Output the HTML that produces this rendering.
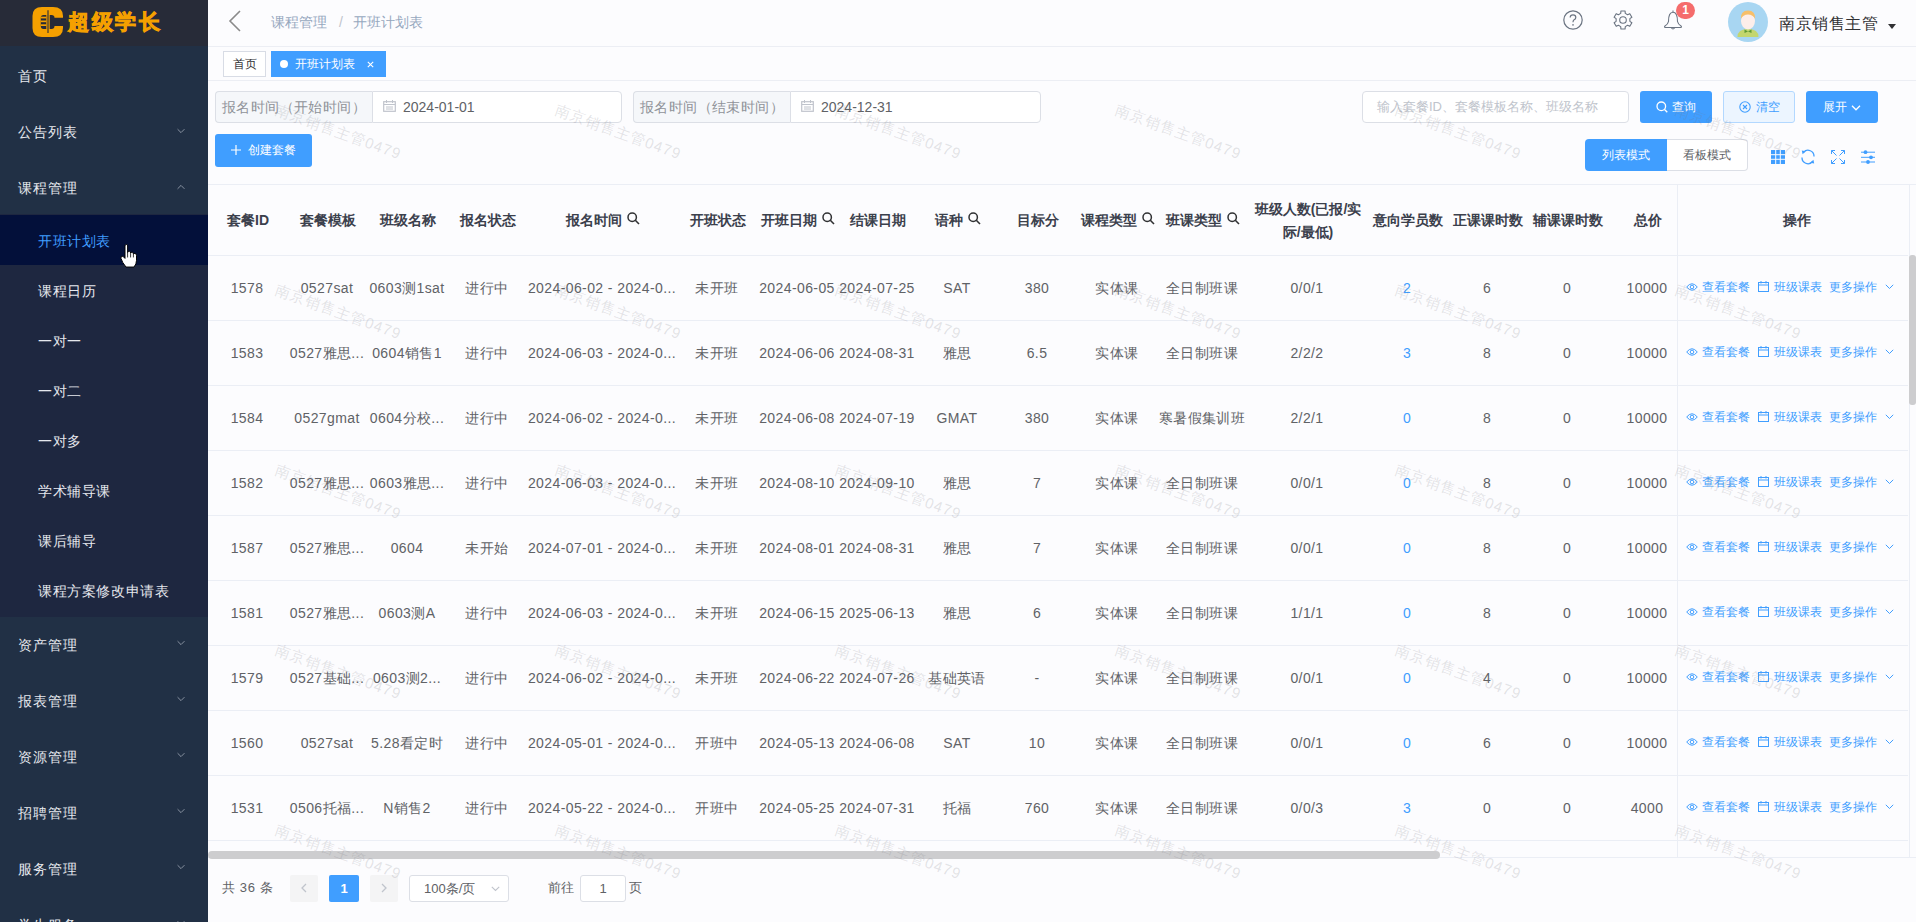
<!DOCTYPE html>
<html><head><meta charset="utf-8">
<style>
*{box-sizing:border-box;margin:0;padding:0}
html,body{width:1916px;height:922px;overflow:hidden;background:#fcfcfe;font-family:"Liberation Sans",sans-serif;color:#606266}
.abs{position:absolute}
#side{position:absolute;left:0;top:0;width:208px;height:922px;background:#213045;overflow:hidden}
#logo{position:absolute;left:0;top:0;width:208px;height:46px;background:#272b38}
.mi{position:absolute;left:0;width:208px;height:56px;line-height:60px;padding-left:18px;font-size:14px;letter-spacing:1px;color:#e6e8ee}
.sub{position:absolute;left:0;top:214px;width:208px;height:403px;background:#1e2740}
.si{position:absolute;left:0;width:208px;height:50px;line-height:52px;padding-left:38px;font-size:14px;letter-spacing:0.6px;color:#e6e8ee}
.si.act{background:#03103a;color:#409eff}
.chev{position:absolute;left:177px;width:8px;height:8px}
#main{position:absolute;left:208px;top:0;width:1708px;height:922px}
.hline{position:absolute;left:208px;width:1708px;height:1px;background:#eceef4}

.ipt{position:absolute;height:32px;border:1px solid #dcdfe6;background:#fff;font-size:14px;line-height:30px;color:#606266}
.pre{position:absolute;height:32px;border:1px solid #dcdfe6;border-right:0;background:#f5f7fa;border-radius:4px 0 0 4px;font-size:14px;line-height:30px;color:#909399;padding-left:6px;letter-spacing:0.4px;white-space:nowrap}
.btn{position:absolute;height:32px;border-radius:3px;background:#409eff;color:#fff;font-size:12px;line-height:32px;text-align:center;white-space:nowrap}
.tag{position:absolute;top:51px;height:26px;font-size:12px;line-height:24px;border:1px solid #d8dce5;background:#fff;color:#303133;white-space:nowrap}

.th{position:absolute;top:185px;height:71px;display:flex;align-items:center;justify-content:center;text-align:center;font-size:14px;font-weight:bold;color:#3b404c;line-height:23px;white-space:nowrap}
.th .si2{margin-left:5px;margin-top:-4px}
.td{position:absolute;height:65px;line-height:67px;margin-left:-1px;text-align:center;font-size:14px;letter-spacing:0.4px;color:#606266;white-space:nowrap}
.rl{position:absolute;left:208px;width:1700px;height:1px;background:#ebeef5}
.op{position:absolute;left:1686px;height:65px;line-height:65px;font-size:12px;color:#409eff;white-space:nowrap}
.wm{position:absolute;width:140px;height:20px;line-height:20px;text-align:center;font-size:15px;letter-spacing:1px;color:rgba(120,120,130,0.2);transform:rotate(20deg);white-space:nowrap;pointer-events:none}
</style></head>
<body>
<div id="side">
  <div id="logo">
    <svg class="abs" style="left:32px;top:7px" width="32" height="30" viewBox="0 0 32 30">
      <path d="M10 0H21Q31 0 31 9V21Q31 30 21 30H10Q0.5 30 0.5 21V9Q0.5 0 10 0Z" fill="#f5a000"/>
      <path d="M11.5 8H19.5Q22.5 8 22.5 10.7H32V19H22.5Q22.5 22 19.5 22H11.5Q8.8 22 8.8 19V11Q8.8 8 11.5 8Z" fill="#272b38"/>
      <rect x="14.3" y="8" width="3.4" height="14" fill="#f5a000"/>
      <rect x="8.8" y="9.7" width="5.6" height="1.7" fill="#f5a000"/>
      <rect x="8.8" y="13.5" width="5.6" height="1.7" fill="#f5a000"/>
      <rect x="8.8" y="17.3" width="5.6" height="1.7" fill="#f5a000"/>
      <path d="M16 3.2V26" stroke="#272b38" stroke-width="1.1"/>
    </svg>
    <div class="abs" style="left:68px;top:9px;font-size:21px;line-height:26px;font-weight:900;color:#f5a000;letter-spacing:2.5px;white-space:nowrap;-webkit-text-stroke:0.9px #f5a000">超级学长</div>
  </div>
  <div class="mi" style="top:46px">首页</div>
  <div class="mi" style="top:102px">公告列表</div>
  <svg class="chev" style="top:127px" width="10" height="6" viewBox="0 0 10 6"><path d="M0.7 0.7L5 5L9.3 0.7" fill="none" stroke="#a3abb9" stroke-width="1"/></svg>
  <div class="mi" style="top:158px">课程管理</div>
  <svg class="chev" style="top:183px" width="10" height="6" viewBox="0 0 10 6"><path d="M0.7 5.3L5 1L9.3 5.3" fill="none" stroke="#a3abb9" stroke-width="1"/></svg>
  <div class="sub"></div>
  <div class="si act" style="top:215px">开班计划表</div>
  <div class="si" style="top:265px">课程日历</div>
  <div class="si" style="top:315px">一对一</div>
  <div class="si" style="top:365px">一对二</div>
  <div class="si" style="top:415px">一对多</div>
  <div class="si" style="top:465px">学术辅导课</div>
  <div class="si" style="top:515px">课后辅导</div>
  <div class="si" style="top:565px">课程方案修改申请表</div>
  <div class="mi" style="top:615px">资产管理</div>
  <svg class="chev" style="top:639px" width="10" height="6" viewBox="0 0 10 6"><path d="M0.7 0.7L5 5L9.3 0.7" fill="none" stroke="#a3abb9" stroke-width="1"/></svg>
  <div class="mi" style="top:671px">报表管理</div>
  <svg class="chev" style="top:695px" width="10" height="6" viewBox="0 0 10 6"><path d="M0.7 0.7L5 5L9.3 0.7" fill="none" stroke="#a3abb9" stroke-width="1"/></svg>
  <div class="mi" style="top:727px">资源管理</div>
  <svg class="chev" style="top:751px" width="10" height="6" viewBox="0 0 10 6"><path d="M0.7 0.7L5 5L9.3 0.7" fill="none" stroke="#a3abb9" stroke-width="1"/></svg>
  <div class="mi" style="top:783px">招聘管理</div>
  <svg class="chev" style="top:807px" width="10" height="6" viewBox="0 0 10 6"><path d="M0.7 0.7L5 5L9.3 0.7" fill="none" stroke="#a3abb9" stroke-width="1"/></svg>
  <div class="mi" style="top:839px">服务管理</div>
  <svg class="chev" style="top:863px" width="10" height="6" viewBox="0 0 10 6"><path d="M0.7 0.7L5 5L9.3 0.7" fill="none" stroke="#a3abb9" stroke-width="1"/></svg>
  <div class="mi" style="top:895px">学生服务</div>
  <svg class="chev" style="top:919px" width="10" height="6" viewBox="0 0 10 6"><path d="M0.7 0.7L5 5L9.3 0.7" fill="none" stroke="#a3abb9" stroke-width="1"/></svg>
</div>
</div>

<div id="hdr">
  <svg class="abs" style="left:228px;top:10px" width="14" height="22" viewBox="0 0 14 22"><path d="M12 1L2 11L12 21" fill="none" stroke="#8a8a8a" stroke-width="1.6"/></svg>
  <div class="abs" style="left:271px;top:12px;font-size:14px;line-height:20px;color:#97a8be;white-space:nowrap">课程管理<span style="margin:0 10px 0 12px;color:#c0c4cc">/</span>开班计划表</div>
  <svg class="abs" style="left:1562px;top:9px" width="22" height="22" viewBox="0 0 22 22"><circle cx="11" cy="11" r="9.2" fill="none" stroke="#6b7482" stroke-width="1.2"/><path d="M8.2 8.6Q8.2 5.8 11 5.8Q13.8 5.8 13.8 8.4Q13.8 9.9 12.1 10.8Q11 11.5 11 13.2" fill="none" stroke="#6b7482" stroke-width="1.2"/><circle cx="11" cy="15.9" r="0.8" fill="#6b7482"/></svg>
  <svg class="abs" style="left:1612px;top:9px" width="22" height="22" viewBox="0 0 22 22"><path d="M8.72 4.38 L8.91 1.94 L13.09 1.94 L13.28 4.38 L15.59 5.72 L17.80 4.66 L19.89 8.28 L17.87 9.66 L17.87 12.34 L19.89 13.72 L17.80 17.34 L15.59 16.28 L13.28 17.62 L13.09 20.06 L8.91 20.06 L8.72 17.62 L6.41 16.28 L4.20 17.34 L2.11 13.72 L4.13 12.34 L4.13 9.66 L2.11 8.28 L4.20 4.66 L6.41 5.72Z" fill="none" stroke="#6b7482" stroke-width="1.1" stroke-linejoin="round"/><circle cx="11" cy="11" r="3.3" fill="none" stroke="#6b7482" stroke-width="1.1"/></svg>
  <svg class="abs" style="left:1662px;top:9px" width="22" height="22" viewBox="0 0 22 22"><path d="M11 1.5V3M6.5 12.5Q6.5 3.2 11 3.2Q15.5 3.2 15.5 12.5Q15.8 14.8 19.3 17.3Q19.8 18.2 18.8 18.5H3.2Q2.2 18.2 2.7 17.3Q6.2 14.8 6.5 12.5Z" fill="none" stroke="#6b7482" stroke-width="1.1" stroke-linejoin="round"/><path d="M9.3 18.8Q11 21.3 12.7 18.8" fill="none" stroke="#6b7482" stroke-width="1.1"/></svg>
  <div class="abs" style="left:1676px;top:2px;width:19px;height:17px;border-radius:9px;background:#f56c6c;color:#fff;font-size:12px;line-height:17px;text-align:center;font-weight:bold">1</div>
  <svg class="abs" style="left:1728px;top:2px" width="40" height="40" viewBox="0 0 40 40"><circle cx="20" cy="20" r="20" fill="#a8d6f2"/><path d="M9.5 35Q9.5 27 20 27Q30.5 27 30.5 35Z" fill="#c3d66e"/><ellipse cx="20" cy="19" rx="7" ry="8.5" fill="#fdeeea"/><path d="M12.8 17Q12.5 8.5 20 8.5Q27.5 8.5 27.2 17Q25 12.5 20 12.5Q15 12.5 12.8 17Z" fill="#f7bf6a"/><path d="M16.5 27.5L20 29.5L23.5 27.5V31L20 29.5L16.5 31Z" fill="#5f9a35"/></svg>
  <div class="abs" style="left:1779px;top:13px;font-size:16px;line-height:22px;color:#303133;letter-spacing:0.5px;white-space:nowrap">南京销售主管</div>
  <svg class="abs" style="left:1888px;top:24px" width="8" height="5" viewBox="0 0 8 5"><path d="M0 0H8L4 5Z" fill="#303133"/></svg>
</div>
<div class="hline" style="top:46px"></div>
<div class="tag" style="left:223px;width:43px;text-align:center">首页</div>
<div class="tag" style="left:271px;width:115px;background:#409eff;border-color:#409eff;color:#fff;padding-left:23px">
  <span class="abs" style="left:8px;top:8px;width:8px;height:8px;border-radius:4px;background:#fff"></span>开班计划表<svg class="abs" style="left:95px;top:9px" width="7" height="7" viewBox="0 0 7 7"><path d="M0.8 0.8L6.2 6.2M6.2 0.8L0.8 6.2" stroke="#fff" stroke-width="1.1"/></svg>
</div>
<div class="hline" style="top:80px"></div>

<div class="pre" style="left:215px;top:91px;width:157px">报名时间（开始时间）</div>
<div class="ipt" style="left:372px;top:91px;width:250px;border-radius:0 4px 4px 0;padding-left:30px">2024-01-01</div>
<svg class="abs" style="left:383px;top:100px" width="13" height="12" viewBox="0 0 13 12"><rect x="0.7" y="1.7" width="11.6" height="9.6" fill="none" stroke="#c0c4cc" stroke-width="1.2"/><path d="M1 4.5H12M3.5 0V3M9.5 0V3M3 7H10M3 9H10" stroke="#c0c4cc" stroke-width="1"/></svg>
<div class="pre" style="left:633px;top:91px;width:157px">报名时间（结束时间）</div>
<div class="ipt" style="left:790px;top:91px;width:251px;border-radius:0 4px 4px 0;padding-left:30px">2024-12-31</div>
<svg class="abs" style="left:801px;top:100px" width="13" height="12" viewBox="0 0 13 12"><rect x="0.7" y="1.7" width="11.6" height="9.6" fill="none" stroke="#c0c4cc" stroke-width="1.2"/><path d="M1 4.5H12M3.5 0V3M9.5 0V3M3 7H10M3 9H10" stroke="#c0c4cc" stroke-width="1"/></svg>

<div class="ipt" style="left:1362px;top:91px;width:267px;border-radius:4px;padding-left:14px;font-size:13px;color:#c0c4cc">输入套餐ID、套餐模板名称、班级名称</div>
<div class="btn" style="left:1640px;top:91px;width:72px"><svg style="vertical-align:-2px;margin-right:4px" width="12" height="12" viewBox="0 0 12 12"><circle cx="5.3" cy="5.3" r="4.3" fill="none" stroke="#fff" stroke-width="1.3"/><path d="M8.5 8.5L11.3 11.3" stroke="#fff" stroke-width="1.3"/></svg>查询</div>
<div class="btn" style="left:1723px;top:91px;width:72px;background:#ecf5ff;border:1px solid #b3d8ff;color:#409eff;line-height:30px"><svg style="vertical-align:-2px;margin-right:5px" width="12" height="12" viewBox="0 0 12 12"><circle cx="6" cy="6" r="5.2" fill="none" stroke="#409eff" stroke-width="1.1"/><path d="M4 4L8 8M8 4L4 8" stroke="#409eff" stroke-width="1.1"/></svg>清空</div>
<div class="btn" style="left:1806px;top:91px;width:72px">展开<svg style="margin-left:4px;vertical-align:0px" width="10" height="6" viewBox="0 0 10 6"><path d="M1 0.8L5 4.8L9 0.8" fill="none" stroke="#fff" stroke-width="1.3"/></svg></div>

<div class="btn" style="left:215px;top:134px;width:97px;height:33px;line-height:33px"><svg style="vertical-align:-1px;margin-right:7px" width="10" height="10" viewBox="0 0 10 10"><path d="M5 0V10M0 5H10" stroke="#fff" stroke-width="1.2"/></svg>创建套餐</div>

<div class="btn" style="left:1585px;top:139px;width:82px;border-radius:4px 0 0 4px;line-height:32px">列表模式</div>
<div class="btn" style="left:1667px;top:139px;width:81px;border-radius:0 4px 4px 0;background:#fff;border:1px solid #dcdfe6;border-left:0;color:#606266;line-height:30px">看板模式</div>
<div class="rl" style="top:184px;width:1708px"></div>
<div class="th" style="left:208px;width:80px">套餐ID</div>
<div class="th" style="left:288px;width:80px">套餐模板</div>
<div class="th" style="left:368px;width:80px">班级名称</div>
<div class="th" style="left:448px;width:80px">报名状态</div>
<div class="th" style="left:528px;width:150px">报名时间<svg class="si2" width="13" height="13" viewBox="0 0 13 13"><circle cx="5.2" cy="5.2" r="4.2" fill="none" stroke="#303133" stroke-width="1.5"/><path d="M8.3 8.3L12 12" stroke="#303133" stroke-width="1.6"/></svg></div>
<div class="th" style="left:678px;width:80px">开班状态</div>
<div class="th" style="left:758px;width:80px">开班日期<svg class="si2" width="13" height="13" viewBox="0 0 13 13"><circle cx="5.2" cy="5.2" r="4.2" fill="none" stroke="#303133" stroke-width="1.5"/><path d="M8.3 8.3L12 12" stroke="#303133" stroke-width="1.6"/></svg></div>
<div class="th" style="left:838px;width:80px">结课日期</div>
<div class="th" style="left:918px;width:80px">语种<svg class="si2" width="13" height="13" viewBox="0 0 13 13"><circle cx="5.2" cy="5.2" r="4.2" fill="none" stroke="#303133" stroke-width="1.5"/><path d="M8.3 8.3L12 12" stroke="#303133" stroke-width="1.6"/></svg></div>
<div class="th" style="left:998px;width:80px">目标分</div>
<div class="th" style="left:1078px;width:80px">课程类型<svg class="si2" width="13" height="13" viewBox="0 0 13 13"><circle cx="5.2" cy="5.2" r="4.2" fill="none" stroke="#303133" stroke-width="1.5"/><path d="M8.3 8.3L12 12" stroke="#303133" stroke-width="1.6"/></svg></div>
<div class="th" style="left:1158px;width:90px">班课类型<svg class="si2" width="13" height="13" viewBox="0 0 13 13"><circle cx="5.2" cy="5.2" r="4.2" fill="none" stroke="#303133" stroke-width="1.5"/><path d="M8.3 8.3L12 12" stroke="#303133" stroke-width="1.6"/></svg></div>
<div class="th" style="left:1248px;width:120px">班级人数(已报/实<br>际/最低)</div>
<div class="th" style="left:1368px;width:80px">意向学员数</div>
<div class="th" style="left:1448px;width:80px">正课课时数</div>
<div class="th" style="left:1528px;width:80px">辅课课时数</div>
<div class="th" style="left:1608px;width:80px">总价</div>
<div class="th" style="left:1682px;width:230px">操作</div>
<div class="rl" style="top:255px"></div>
<div class="td" style="left:208px;width:80px;top:255px">1578</div>
<div class="td" style="left:288px;width:80px;top:255px">0527sat</div>
<div class="td" style="left:368px;width:80px;top:255px">0603测1sat</div>
<div class="td" style="left:448px;width:80px;top:255px">进行中</div>
<div class="td" style="left:528px;width:150px;top:255px">2024-06-02 - 2024-0...</div>
<div class="td" style="left:678px;width:80px;top:255px">未开班</div>
<div class="td" style="left:758px;width:80px;top:255px">2024-06-05</div>
<div class="td" style="left:838px;width:80px;top:255px">2024-07-25</div>
<div class="td" style="left:918px;width:80px;top:255px">SAT</div>
<div class="td" style="left:998px;width:80px;top:255px">380</div>
<div class="td" style="left:1078px;width:80px;top:255px">实体课</div>
<div class="td" style="left:1158px;width:90px;top:255px">全日制班课</div>
<div class="td" style="left:1248px;width:120px;top:255px">0/0/1</div>
<div class="td" style="left:1368px;width:80px;top:255px;color:#409eff">2</div>
<div class="td" style="left:1448px;width:80px;top:255px">6</div>
<div class="td" style="left:1528px;width:80px;top:255px">0</div>
<div class="td" style="left:1608px;width:80px;top:255px">10000</div>
<div class="op" style="top:255px"><svg width="12" height="10" viewBox="0 0 12 10" style="vertical-align:-1px;margin-right:4px"><path d="M0.7 5Q6 -1.5 11.3 5Q6 11.5 0.7 5Z" fill="none" stroke="#409eff" stroke-width="1"/><circle cx="6" cy="5" r="1.8" fill="none" stroke="#409eff" stroke-width="1"/></svg>查看套餐<span style="margin-left:8px"></span><svg width="11" height="11" viewBox="0 0 11 11" style="vertical-align:-1px;margin-right:5px"><rect x="0.5" y="1.5" width="10" height="9" fill="none" stroke="#409eff" stroke-width="1"/><path d="M0.5 4H10.5M3 0V2.5M8 0V2.5" stroke="#409eff" stroke-width="1"/></svg>班级课表<span style="margin-left:7px"></span>更多操作<svg width="9" height="6" viewBox="0 0 9 6" style="vertical-align:1px;margin-left:8px"><path d="M0.8 0.8L4.5 4.5L8.2 0.8" fill="none" stroke="#409eff" stroke-width="1"/></svg></div>
<div class="rl" style="top:320px"></div>
<div class="td" style="left:208px;width:80px;top:320px">1583</div>
<div class="td" style="left:288px;width:80px;top:320px">0527雅思...</div>
<div class="td" style="left:368px;width:80px;top:320px">0604销售1</div>
<div class="td" style="left:448px;width:80px;top:320px">进行中</div>
<div class="td" style="left:528px;width:150px;top:320px">2024-06-03 - 2024-0...</div>
<div class="td" style="left:678px;width:80px;top:320px">未开班</div>
<div class="td" style="left:758px;width:80px;top:320px">2024-06-06</div>
<div class="td" style="left:838px;width:80px;top:320px">2024-08-31</div>
<div class="td" style="left:918px;width:80px;top:320px">雅思</div>
<div class="td" style="left:998px;width:80px;top:320px">6.5</div>
<div class="td" style="left:1078px;width:80px;top:320px">实体课</div>
<div class="td" style="left:1158px;width:90px;top:320px">全日制班课</div>
<div class="td" style="left:1248px;width:120px;top:320px">2/2/2</div>
<div class="td" style="left:1368px;width:80px;top:320px;color:#409eff">3</div>
<div class="td" style="left:1448px;width:80px;top:320px">8</div>
<div class="td" style="left:1528px;width:80px;top:320px">0</div>
<div class="td" style="left:1608px;width:80px;top:320px">10000</div>
<div class="op" style="top:320px"><svg width="12" height="10" viewBox="0 0 12 10" style="vertical-align:-1px;margin-right:4px"><path d="M0.7 5Q6 -1.5 11.3 5Q6 11.5 0.7 5Z" fill="none" stroke="#409eff" stroke-width="1"/><circle cx="6" cy="5" r="1.8" fill="none" stroke="#409eff" stroke-width="1"/></svg>查看套餐<span style="margin-left:8px"></span><svg width="11" height="11" viewBox="0 0 11 11" style="vertical-align:-1px;margin-right:5px"><rect x="0.5" y="1.5" width="10" height="9" fill="none" stroke="#409eff" stroke-width="1"/><path d="M0.5 4H10.5M3 0V2.5M8 0V2.5" stroke="#409eff" stroke-width="1"/></svg>班级课表<span style="margin-left:7px"></span>更多操作<svg width="9" height="6" viewBox="0 0 9 6" style="vertical-align:1px;margin-left:8px"><path d="M0.8 0.8L4.5 4.5L8.2 0.8" fill="none" stroke="#409eff" stroke-width="1"/></svg></div>
<div class="rl" style="top:385px"></div>
<div class="td" style="left:208px;width:80px;top:385px">1584</div>
<div class="td" style="left:288px;width:80px;top:385px">0527gmat</div>
<div class="td" style="left:368px;width:80px;top:385px">0604分校...</div>
<div class="td" style="left:448px;width:80px;top:385px">进行中</div>
<div class="td" style="left:528px;width:150px;top:385px">2024-06-02 - 2024-0...</div>
<div class="td" style="left:678px;width:80px;top:385px">未开班</div>
<div class="td" style="left:758px;width:80px;top:385px">2024-06-08</div>
<div class="td" style="left:838px;width:80px;top:385px">2024-07-19</div>
<div class="td" style="left:918px;width:80px;top:385px">GMAT</div>
<div class="td" style="left:998px;width:80px;top:385px">380</div>
<div class="td" style="left:1078px;width:80px;top:385px">实体课</div>
<div class="td" style="left:1158px;width:90px;top:385px">寒暑假集训班</div>
<div class="td" style="left:1248px;width:120px;top:385px">2/2/1</div>
<div class="td" style="left:1368px;width:80px;top:385px;color:#409eff">0</div>
<div class="td" style="left:1448px;width:80px;top:385px">8</div>
<div class="td" style="left:1528px;width:80px;top:385px">0</div>
<div class="td" style="left:1608px;width:80px;top:385px">10000</div>
<div class="op" style="top:385px"><svg width="12" height="10" viewBox="0 0 12 10" style="vertical-align:-1px;margin-right:4px"><path d="M0.7 5Q6 -1.5 11.3 5Q6 11.5 0.7 5Z" fill="none" stroke="#409eff" stroke-width="1"/><circle cx="6" cy="5" r="1.8" fill="none" stroke="#409eff" stroke-width="1"/></svg>查看套餐<span style="margin-left:8px"></span><svg width="11" height="11" viewBox="0 0 11 11" style="vertical-align:-1px;margin-right:5px"><rect x="0.5" y="1.5" width="10" height="9" fill="none" stroke="#409eff" stroke-width="1"/><path d="M0.5 4H10.5M3 0V2.5M8 0V2.5" stroke="#409eff" stroke-width="1"/></svg>班级课表<span style="margin-left:7px"></span>更多操作<svg width="9" height="6" viewBox="0 0 9 6" style="vertical-align:1px;margin-left:8px"><path d="M0.8 0.8L4.5 4.5L8.2 0.8" fill="none" stroke="#409eff" stroke-width="1"/></svg></div>
<div class="rl" style="top:450px"></div>
<div class="td" style="left:208px;width:80px;top:450px">1582</div>
<div class="td" style="left:288px;width:80px;top:450px">0527雅思...</div>
<div class="td" style="left:368px;width:80px;top:450px">0603雅思...</div>
<div class="td" style="left:448px;width:80px;top:450px">进行中</div>
<div class="td" style="left:528px;width:150px;top:450px">2024-06-03 - 2024-0...</div>
<div class="td" style="left:678px;width:80px;top:450px">未开班</div>
<div class="td" style="left:758px;width:80px;top:450px">2024-08-10</div>
<div class="td" style="left:838px;width:80px;top:450px">2024-09-10</div>
<div class="td" style="left:918px;width:80px;top:450px">雅思</div>
<div class="td" style="left:998px;width:80px;top:450px">7</div>
<div class="td" style="left:1078px;width:80px;top:450px">实体课</div>
<div class="td" style="left:1158px;width:90px;top:450px">全日制班课</div>
<div class="td" style="left:1248px;width:120px;top:450px">0/0/1</div>
<div class="td" style="left:1368px;width:80px;top:450px;color:#409eff">0</div>
<div class="td" style="left:1448px;width:80px;top:450px">8</div>
<div class="td" style="left:1528px;width:80px;top:450px">0</div>
<div class="td" style="left:1608px;width:80px;top:450px">10000</div>
<div class="op" style="top:450px"><svg width="12" height="10" viewBox="0 0 12 10" style="vertical-align:-1px;margin-right:4px"><path d="M0.7 5Q6 -1.5 11.3 5Q6 11.5 0.7 5Z" fill="none" stroke="#409eff" stroke-width="1"/><circle cx="6" cy="5" r="1.8" fill="none" stroke="#409eff" stroke-width="1"/></svg>查看套餐<span style="margin-left:8px"></span><svg width="11" height="11" viewBox="0 0 11 11" style="vertical-align:-1px;margin-right:5px"><rect x="0.5" y="1.5" width="10" height="9" fill="none" stroke="#409eff" stroke-width="1"/><path d="M0.5 4H10.5M3 0V2.5M8 0V2.5" stroke="#409eff" stroke-width="1"/></svg>班级课表<span style="margin-left:7px"></span>更多操作<svg width="9" height="6" viewBox="0 0 9 6" style="vertical-align:1px;margin-left:8px"><path d="M0.8 0.8L4.5 4.5L8.2 0.8" fill="none" stroke="#409eff" stroke-width="1"/></svg></div>
<div class="rl" style="top:515px"></div>
<div class="td" style="left:208px;width:80px;top:515px">1587</div>
<div class="td" style="left:288px;width:80px;top:515px">0527雅思...</div>
<div class="td" style="left:368px;width:80px;top:515px">0604</div>
<div class="td" style="left:448px;width:80px;top:515px">未开始</div>
<div class="td" style="left:528px;width:150px;top:515px">2024-07-01 - 2024-0...</div>
<div class="td" style="left:678px;width:80px;top:515px">未开班</div>
<div class="td" style="left:758px;width:80px;top:515px">2024-08-01</div>
<div class="td" style="left:838px;width:80px;top:515px">2024-08-31</div>
<div class="td" style="left:918px;width:80px;top:515px">雅思</div>
<div class="td" style="left:998px;width:80px;top:515px">7</div>
<div class="td" style="left:1078px;width:80px;top:515px">实体课</div>
<div class="td" style="left:1158px;width:90px;top:515px">全日制班课</div>
<div class="td" style="left:1248px;width:120px;top:515px">0/0/1</div>
<div class="td" style="left:1368px;width:80px;top:515px;color:#409eff">0</div>
<div class="td" style="left:1448px;width:80px;top:515px">8</div>
<div class="td" style="left:1528px;width:80px;top:515px">0</div>
<div class="td" style="left:1608px;width:80px;top:515px">10000</div>
<div class="op" style="top:515px"><svg width="12" height="10" viewBox="0 0 12 10" style="vertical-align:-1px;margin-right:4px"><path d="M0.7 5Q6 -1.5 11.3 5Q6 11.5 0.7 5Z" fill="none" stroke="#409eff" stroke-width="1"/><circle cx="6" cy="5" r="1.8" fill="none" stroke="#409eff" stroke-width="1"/></svg>查看套餐<span style="margin-left:8px"></span><svg width="11" height="11" viewBox="0 0 11 11" style="vertical-align:-1px;margin-right:5px"><rect x="0.5" y="1.5" width="10" height="9" fill="none" stroke="#409eff" stroke-width="1"/><path d="M0.5 4H10.5M3 0V2.5M8 0V2.5" stroke="#409eff" stroke-width="1"/></svg>班级课表<span style="margin-left:7px"></span>更多操作<svg width="9" height="6" viewBox="0 0 9 6" style="vertical-align:1px;margin-left:8px"><path d="M0.8 0.8L4.5 4.5L8.2 0.8" fill="none" stroke="#409eff" stroke-width="1"/></svg></div>
<div class="rl" style="top:580px"></div>
<div class="td" style="left:208px;width:80px;top:580px">1581</div>
<div class="td" style="left:288px;width:80px;top:580px">0527雅思...</div>
<div class="td" style="left:368px;width:80px;top:580px">0603测A</div>
<div class="td" style="left:448px;width:80px;top:580px">进行中</div>
<div class="td" style="left:528px;width:150px;top:580px">2024-06-03 - 2024-0...</div>
<div class="td" style="left:678px;width:80px;top:580px">未开班</div>
<div class="td" style="left:758px;width:80px;top:580px">2024-06-15</div>
<div class="td" style="left:838px;width:80px;top:580px">2025-06-13</div>
<div class="td" style="left:918px;width:80px;top:580px">雅思</div>
<div class="td" style="left:998px;width:80px;top:580px">6</div>
<div class="td" style="left:1078px;width:80px;top:580px">实体课</div>
<div class="td" style="left:1158px;width:90px;top:580px">全日制班课</div>
<div class="td" style="left:1248px;width:120px;top:580px">1/1/1</div>
<div class="td" style="left:1368px;width:80px;top:580px;color:#409eff">0</div>
<div class="td" style="left:1448px;width:80px;top:580px">8</div>
<div class="td" style="left:1528px;width:80px;top:580px">0</div>
<div class="td" style="left:1608px;width:80px;top:580px">10000</div>
<div class="op" style="top:580px"><svg width="12" height="10" viewBox="0 0 12 10" style="vertical-align:-1px;margin-right:4px"><path d="M0.7 5Q6 -1.5 11.3 5Q6 11.5 0.7 5Z" fill="none" stroke="#409eff" stroke-width="1"/><circle cx="6" cy="5" r="1.8" fill="none" stroke="#409eff" stroke-width="1"/></svg>查看套餐<span style="margin-left:8px"></span><svg width="11" height="11" viewBox="0 0 11 11" style="vertical-align:-1px;margin-right:5px"><rect x="0.5" y="1.5" width="10" height="9" fill="none" stroke="#409eff" stroke-width="1"/><path d="M0.5 4H10.5M3 0V2.5M8 0V2.5" stroke="#409eff" stroke-width="1"/></svg>班级课表<span style="margin-left:7px"></span>更多操作<svg width="9" height="6" viewBox="0 0 9 6" style="vertical-align:1px;margin-left:8px"><path d="M0.8 0.8L4.5 4.5L8.2 0.8" fill="none" stroke="#409eff" stroke-width="1"/></svg></div>
<div class="rl" style="top:645px"></div>
<div class="td" style="left:208px;width:80px;top:645px">1579</div>
<div class="td" style="left:288px;width:80px;top:645px">0527基础...</div>
<div class="td" style="left:368px;width:80px;top:645px">0603测2...</div>
<div class="td" style="left:448px;width:80px;top:645px">进行中</div>
<div class="td" style="left:528px;width:150px;top:645px">2024-06-02 - 2024-0...</div>
<div class="td" style="left:678px;width:80px;top:645px">未开班</div>
<div class="td" style="left:758px;width:80px;top:645px">2024-06-22</div>
<div class="td" style="left:838px;width:80px;top:645px">2024-07-26</div>
<div class="td" style="left:918px;width:80px;top:645px">基础英语</div>
<div class="td" style="left:998px;width:80px;top:645px">-</div>
<div class="td" style="left:1078px;width:80px;top:645px">实体课</div>
<div class="td" style="left:1158px;width:90px;top:645px">全日制班课</div>
<div class="td" style="left:1248px;width:120px;top:645px">0/0/1</div>
<div class="td" style="left:1368px;width:80px;top:645px;color:#409eff">0</div>
<div class="td" style="left:1448px;width:80px;top:645px">4</div>
<div class="td" style="left:1528px;width:80px;top:645px">0</div>
<div class="td" style="left:1608px;width:80px;top:645px">10000</div>
<div class="op" style="top:645px"><svg width="12" height="10" viewBox="0 0 12 10" style="vertical-align:-1px;margin-right:4px"><path d="M0.7 5Q6 -1.5 11.3 5Q6 11.5 0.7 5Z" fill="none" stroke="#409eff" stroke-width="1"/><circle cx="6" cy="5" r="1.8" fill="none" stroke="#409eff" stroke-width="1"/></svg>查看套餐<span style="margin-left:8px"></span><svg width="11" height="11" viewBox="0 0 11 11" style="vertical-align:-1px;margin-right:5px"><rect x="0.5" y="1.5" width="10" height="9" fill="none" stroke="#409eff" stroke-width="1"/><path d="M0.5 4H10.5M3 0V2.5M8 0V2.5" stroke="#409eff" stroke-width="1"/></svg>班级课表<span style="margin-left:7px"></span>更多操作<svg width="9" height="6" viewBox="0 0 9 6" style="vertical-align:1px;margin-left:8px"><path d="M0.8 0.8L4.5 4.5L8.2 0.8" fill="none" stroke="#409eff" stroke-width="1"/></svg></div>
<div class="rl" style="top:710px"></div>
<div class="td" style="left:208px;width:80px;top:710px">1560</div>
<div class="td" style="left:288px;width:80px;top:710px">0527sat</div>
<div class="td" style="left:368px;width:80px;top:710px">5.28看定时</div>
<div class="td" style="left:448px;width:80px;top:710px">进行中</div>
<div class="td" style="left:528px;width:150px;top:710px">2024-05-01 - 2024-0...</div>
<div class="td" style="left:678px;width:80px;top:710px">开班中</div>
<div class="td" style="left:758px;width:80px;top:710px">2024-05-13</div>
<div class="td" style="left:838px;width:80px;top:710px">2024-06-08</div>
<div class="td" style="left:918px;width:80px;top:710px">SAT</div>
<div class="td" style="left:998px;width:80px;top:710px">10</div>
<div class="td" style="left:1078px;width:80px;top:710px">实体课</div>
<div class="td" style="left:1158px;width:90px;top:710px">全日制班课</div>
<div class="td" style="left:1248px;width:120px;top:710px">0/0/1</div>
<div class="td" style="left:1368px;width:80px;top:710px;color:#409eff">0</div>
<div class="td" style="left:1448px;width:80px;top:710px">6</div>
<div class="td" style="left:1528px;width:80px;top:710px">0</div>
<div class="td" style="left:1608px;width:80px;top:710px">10000</div>
<div class="op" style="top:710px"><svg width="12" height="10" viewBox="0 0 12 10" style="vertical-align:-1px;margin-right:4px"><path d="M0.7 5Q6 -1.5 11.3 5Q6 11.5 0.7 5Z" fill="none" stroke="#409eff" stroke-width="1"/><circle cx="6" cy="5" r="1.8" fill="none" stroke="#409eff" stroke-width="1"/></svg>查看套餐<span style="margin-left:8px"></span><svg width="11" height="11" viewBox="0 0 11 11" style="vertical-align:-1px;margin-right:5px"><rect x="0.5" y="1.5" width="10" height="9" fill="none" stroke="#409eff" stroke-width="1"/><path d="M0.5 4H10.5M3 0V2.5M8 0V2.5" stroke="#409eff" stroke-width="1"/></svg>班级课表<span style="margin-left:7px"></span>更多操作<svg width="9" height="6" viewBox="0 0 9 6" style="vertical-align:1px;margin-left:8px"><path d="M0.8 0.8L4.5 4.5L8.2 0.8" fill="none" stroke="#409eff" stroke-width="1"/></svg></div>
<div class="rl" style="top:775px"></div>
<div class="td" style="left:208px;width:80px;top:775px">1531</div>
<div class="td" style="left:288px;width:80px;top:775px">0506托福...</div>
<div class="td" style="left:368px;width:80px;top:775px">N销售2</div>
<div class="td" style="left:448px;width:80px;top:775px">进行中</div>
<div class="td" style="left:528px;width:150px;top:775px">2024-05-22 - 2024-0...</div>
<div class="td" style="left:678px;width:80px;top:775px">开班中</div>
<div class="td" style="left:758px;width:80px;top:775px">2024-05-25</div>
<div class="td" style="left:838px;width:80px;top:775px">2024-07-31</div>
<div class="td" style="left:918px;width:80px;top:775px">托福</div>
<div class="td" style="left:998px;width:80px;top:775px">760</div>
<div class="td" style="left:1078px;width:80px;top:775px">实体课</div>
<div class="td" style="left:1158px;width:90px;top:775px">全日制班课</div>
<div class="td" style="left:1248px;width:120px;top:775px">0/0/3</div>
<div class="td" style="left:1368px;width:80px;top:775px;color:#409eff">3</div>
<div class="td" style="left:1448px;width:80px;top:775px">0</div>
<div class="td" style="left:1528px;width:80px;top:775px">0</div>
<div class="td" style="left:1608px;width:80px;top:775px">4000</div>
<div class="op" style="top:775px"><svg width="12" height="10" viewBox="0 0 12 10" style="vertical-align:-1px;margin-right:4px"><path d="M0.7 5Q6 -1.5 11.3 5Q6 11.5 0.7 5Z" fill="none" stroke="#409eff" stroke-width="1"/><circle cx="6" cy="5" r="1.8" fill="none" stroke="#409eff" stroke-width="1"/></svg>查看套餐<span style="margin-left:8px"></span><svg width="11" height="11" viewBox="0 0 11 11" style="vertical-align:-1px;margin-right:5px"><rect x="0.5" y="1.5" width="10" height="9" fill="none" stroke="#409eff" stroke-width="1"/><path d="M0.5 4H10.5M3 0V2.5M8 0V2.5" stroke="#409eff" stroke-width="1"/></svg>班级课表<span style="margin-left:7px"></span>更多操作<svg width="9" height="6" viewBox="0 0 9 6" style="vertical-align:1px;margin-left:8px"><path d="M0.8 0.8L4.5 4.5L8.2 0.8" fill="none" stroke="#409eff" stroke-width="1"/></svg></div>
<div class="rl" style="top:840px"></div>
<div class="abs" style="left:1677px;top:184px;width:1px;height:673px;background:#ebeef5"></div>
<div class="abs" style="left:1909px;top:184px;width:1px;height:673px;background:#ebeef5"></div>
<div class="abs" style="left:208px;top:857px;width:1708px;height:1px;background:#ebeef5"></div>
<div class="abs" style="left:1909px;top:255px;width:7px;height:150px;border-radius:3px;background:#cdcdcf"></div>
<div class="abs" style="left:208px;top:851px;width:1232px;height:8px;border-radius:4px;background:#cdcdcf"></div>

<div class="abs" style="left:222px;top:879px;font-size:13px;line-height:18px;letter-spacing:0.6px;color:#606266;white-space:nowrap">共 36 条</div>
<div class="abs" style="left:290px;top:875px;width:28px;height:27px;background:#f4f4f5;border-radius:2px"></div>
<svg class="abs" style="left:300px;top:883px" width="7" height="10" viewBox="0 0 7 10"><path d="M6 1L2 5L6 9" fill="none" stroke="#c0c4cc" stroke-width="1.3"/></svg>
<div class="abs" style="left:329px;top:875px;width:30px;height:27px;background:#409eff;border-radius:2px;color:#fff;font-size:13px;font-weight:bold;line-height:27px;text-align:center">1</div>
<div class="abs" style="left:370px;top:875px;width:28px;height:27px;background:#f4f4f5;border-radius:2px"></div>
<svg class="abs" style="left:381px;top:883px" width="7" height="10" viewBox="0 0 7 10"><path d="M1 1L5 5L1 9" fill="none" stroke="#c0c4cc" stroke-width="1.3"/></svg>
<div class="abs" style="left:409px;top:875px;width:100px;height:27px;border:1px solid #dcdfe6;border-radius:3px;background:#fff;font-size:13px;line-height:25px;color:#606266;padding-left:14px">100条/页</div>
<svg class="abs" style="left:491px;top:886px" width="9" height="6" viewBox="0 0 9 6"><path d="M0.8 0.8L4.5 4.5L8.2 0.8" fill="none" stroke="#c0c4cc" stroke-width="1.1"/></svg>
<div class="abs" style="left:548px;top:879px;font-size:13px;line-height:18px;color:#606266">前往</div>
<div class="abs" style="left:580px;top:875px;width:46px;height:27px;border:1px solid #dcdfe6;border-radius:3px;background:#fff;font-size:13px;line-height:25px;color:#606266;text-align:center">1</div>
<div class="abs" style="left:629px;top:879px;font-size:13px;line-height:18px;color:#606266">页</div>


<svg class="abs" style="left:1771px;top:150px" width="14" height="14" viewBox="0 0 14 14"><path d="M0 0H14V14H0Z" fill="#409eff"/><path d="M4.7 0V14M9.3 0V14M0 4.7H14M0 9.3H14" stroke="#fcfcfe" stroke-width="1"/></svg>
<svg class="abs" style="left:1800px;top:149px" width="16" height="16" viewBox="0 0 16 16"><path d="M3.6 3.2A6 6 0 0 1 14 7.5M12.4 12.8A6 6 0 0 1 2 8.5" fill="none" stroke="#409eff" stroke-width="1.3"/><path d="M1.8 1.5L5.8 2.2L2.6 5.2Z" fill="#409eff"/><path d="M14.2 14.5L10.2 13.8L13.4 10.8Z" fill="#409eff"/></svg>
<svg class="abs" style="left:1831px;top:150px" width="14" height="14" viewBox="0 0 14 14"><path d="M0.5 4V0.5H4M0.5 0.5L5.5 5.5M10 0.5H13.5V4M13.5 0.5L8.5 5.5M13.5 10V13.5H10M13.5 13.5L8.5 8.5M4 13.5H0.5V10M0.5 13.5L5.5 8.5" fill="none" stroke="#409eff" stroke-width="1"/></svg>
<svg class="abs" style="left:1861px;top:150px" width="14" height="14" viewBox="0 0 14 14"><path d="M0 2.2H14M0 7.3H14M0 12H14" stroke="#409eff" stroke-width="1"/><circle cx="4.5" cy="2.2" r="1.9" fill="#409eff"/><circle cx="10" cy="7.3" r="1.9" fill="#409eff"/><circle cx="7" cy="12" r="1.9" fill="#409eff"/></svg>


<svg class="abs" style="left:120px;top:244px" width="18" height="24" viewBox="0 0 18 25" preserveAspectRatio="none"><path d="M5 2Q5 0.5 6.3 0.5Q7.6 0.5 7.6 2V9Q8 7.5 9.3 7.5Q10.6 7.5 10.6 9.5Q11 8.5 12.2 8.5Q13.4 8.5 13.4 10.5Q14 9.7 15 9.8Q16.5 10 16.5 12V17Q16.5 21 14 24H6Q2 19 1 15Q0.5 13 2.2 12.8Q3.5 12.8 5 15Z" fill="#fff" stroke="#000" stroke-width="1"/><path d="M7.6 9V14M10.6 9.5V14M13.4 10.5V14" stroke="#000" stroke-width="0.8"/></svg>

<div class="wm" style="left:268px;top:122px">南京销售主管0479</div>
<div class="wm" style="left:548px;top:122px">南京销售主管0479</div>
<div class="wm" style="left:828px;top:122px">南京销售主管0479</div>
<div class="wm" style="left:1108px;top:122px">南京销售主管0479</div>
<div class="wm" style="left:1388px;top:122px">南京销售主管0479</div>
<div class="wm" style="left:1668px;top:122px">南京销售主管0479</div>
<div class="wm" style="left:268px;top:302px">南京销售主管0479</div>
<div class="wm" style="left:548px;top:302px">南京销售主管0479</div>
<div class="wm" style="left:828px;top:302px">南京销售主管0479</div>
<div class="wm" style="left:1108px;top:302px">南京销售主管0479</div>
<div class="wm" style="left:1388px;top:302px">南京销售主管0479</div>
<div class="wm" style="left:1668px;top:302px">南京销售主管0479</div>
<div class="wm" style="left:268px;top:482px">南京销售主管0479</div>
<div class="wm" style="left:548px;top:482px">南京销售主管0479</div>
<div class="wm" style="left:828px;top:482px">南京销售主管0479</div>
<div class="wm" style="left:1108px;top:482px">南京销售主管0479</div>
<div class="wm" style="left:1388px;top:482px">南京销售主管0479</div>
<div class="wm" style="left:1668px;top:482px">南京销售主管0479</div>
<div class="wm" style="left:268px;top:662px">南京销售主管0479</div>
<div class="wm" style="left:548px;top:662px">南京销售主管0479</div>
<div class="wm" style="left:828px;top:662px">南京销售主管0479</div>
<div class="wm" style="left:1108px;top:662px">南京销售主管0479</div>
<div class="wm" style="left:1388px;top:662px">南京销售主管0479</div>
<div class="wm" style="left:1668px;top:662px">南京销售主管0479</div>
<div class="wm" style="left:268px;top:842px">南京销售主管0479</div>
<div class="wm" style="left:548px;top:842px">南京销售主管0479</div>
<div class="wm" style="left:828px;top:842px">南京销售主管0479</div>
<div class="wm" style="left:1108px;top:842px">南京销售主管0479</div>
<div class="wm" style="left:1388px;top:842px">南京销售主管0479</div>
<div class="wm" style="left:1668px;top:842px">南京销售主管0479</div>
</body></html>
